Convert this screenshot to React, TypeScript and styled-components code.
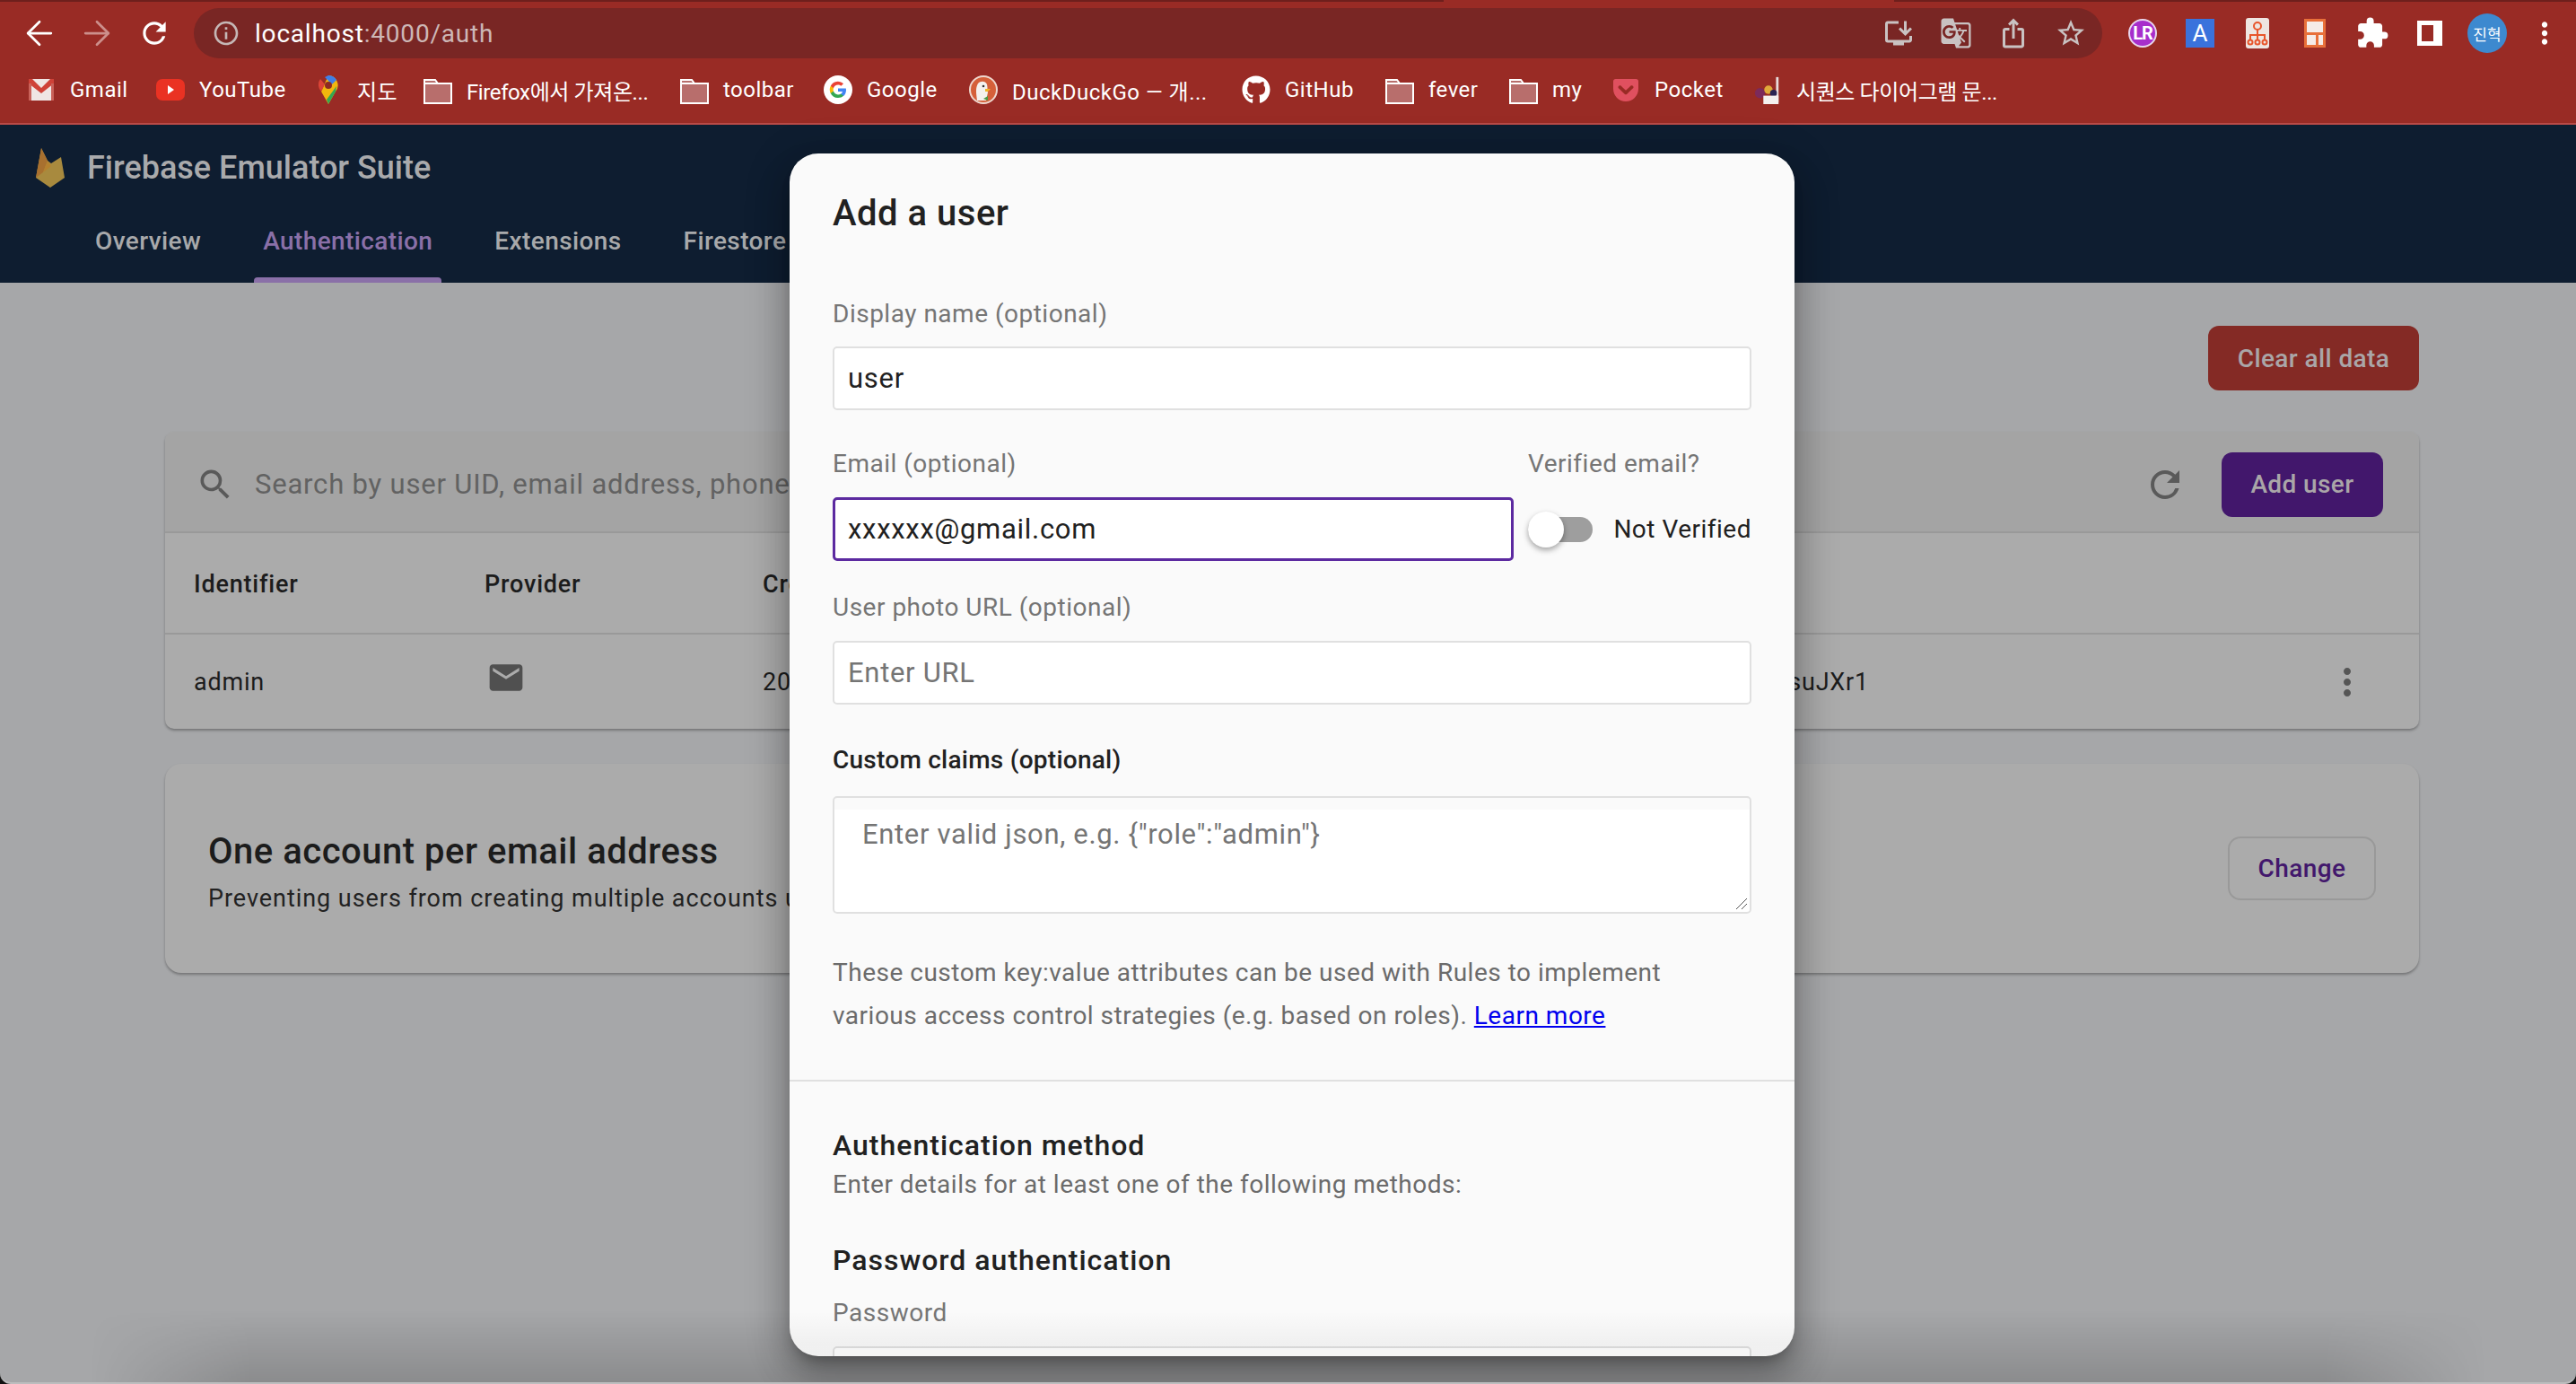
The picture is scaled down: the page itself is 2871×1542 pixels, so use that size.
import React from 'react'
import styled, { createGlobalStyle } from 'styled-components'
import { ArrowLeft, ArrowRight } from 'lucide-react'
import {
  MdExtension,
  MdInfoOutline,
  MdMail,
  MdMoreVert,
  MdRefresh,
  MdSearch,
  MdStarBorder,
  MdIosShare,
  MdInstallDesktop,
  MdGTranslate,
} from 'react-icons/md'
import { FaGithub, FaGetPocket } from 'react-icons/fa'

const GlobalStyle = createGlobalStyle`
  html, body {
    margin: 0;
    padding: 0;
    background: #111;
  }
  body {
    font-family: Roboto, "Noto Sans CJK KR", sans-serif;
    overflow: hidden;
  }
  * { box-sizing: border-box; }
`

const Page = styled.div`
  position: relative;
  width: 2871px;
  height: 1542px;
  overflow: hidden;
  background: #a6a7a9;
  border-bottom: 2px solid #bcbdbe;
  border-radius: 0 0 12px 12px;

  /* the soft darkening along the bottom of the window */
  &::before {
    content: '';
    position: absolute;
    left: 100px;
    right: 100px;
    bottom: 0;
    height: 80px;
    background: linear-gradient(transparent, rgba(0, 0, 0, 0.16));
    mask-image: linear-gradient(90deg, transparent, #000 180px, #000 calc(100% - 180px), transparent);
  }
`

/* browser chrome */
const Toolbar = styled.div`
  height: 74px;
  background: linear-gradient(#6e1f1c, #6e1f1c) 0 0 / 1609px 2px no-repeat, linear-gradient(#6e1f1c, #6e1f1c) 2111px 0 / 760px 2px no-repeat, #992b25;
  display: flex;
  align-items: center;
  padding-left: 12px;
`

const NavButton = styled.div<{ $dim?: boolean }>`
  width: 64px;
  height: 64px;
  display: flex;
  align-items: center;
  justify-content: center;
  color: ${({ $dim }) => ($dim ? '#cc8f8b' : '#fff')};
  font-size: 38px;
`

const Omnibox = styled.div`
  margin-left: 12px;
  width: 2127px;
  height: 56px;
  border-radius: 28px;
  background: #792624;
  display: flex;
  align-items: center;
  padding-left: 20px;
  padding-right: 3px;
`

const InfoIcon = styled.div`
  color: #c5b7b6;
  font-size: 32px;
  display: flex;
  margin-right: 16px;
`

const Url = styled.div`
  font-size: 28px;
  letter-spacing: 0.8px;
  color: #fff;
  flex: 1;
  span { color: #cdb7b6; }
`

const OmniAction = styled.div`
  width: 64px;
  display: flex;
  justify-content: center;
  color: #c9c2c2;
  font-size: 36px;
`

const ExtensionSlot = styled.div`
  width: 64px;
  height: 56px;
  display: flex;
  align-items: center;
  justify-content: center;
  color: #fff;
  font-size: 38px;
`

const ExtensionRow = styled.div`
  margin-left: 13px;
  display: flex;
`

const LrBadge = styled.div`
  width: 32px;
  height: 32px;
  border-radius: 50%;
  background: #a72ecb;
  border: 2px solid #e8d6ee;
  color: #fff;
  font-size: 20px;
  font-weight: 700;
  letter-spacing: -1px;
  display: flex;
  align-items: center;
  justify-content: center;
`

const ABadge = styled.div`
  width: 32px;
  height: 32px;
  background: #3a72dc;
  color: #fff;
  font-size: 26px;
  display: flex;
  align-items: center;
  justify-content: center;
`

const PanelIcon = styled.div`
  width: 28px;
  height: 28px;
  border: 5px solid #fff;
  border-right-width: 10px;
`

const Avatar = styled.div`
  width: 44px;
  height: 44px;
  border-radius: 50%;
  background: #3d89cf;
  color: #fff;
  font-size: 17px;
  display: flex;
  align-items: center;
  justify-content: center;
`

const Bookmarks = styled.div`
  height: 65px;
  background: #992b25;
  border-bottom: 2px solid #b84a47;
  display: flex;
  align-items: center;
  padding: 0 0 11px 30px;
  gap: 34px;
`

const Bookmark = styled.div`
  display: flex;
  align-items: center;
  gap: 16px;
  color: #fff;
  font-size: 24px;
  letter-spacing: 0.5px;
  white-space: nowrap;
`

const BookmarkLabel = styled.span<{ $width: number }>`
  width: ${({ $width }) => $width}px;
`

const CjkLabel = styled(BookmarkLabel)`
  letter-spacing: -0.4px;
`

const BookmarkIcon = styled.div<{ $color?: string }>`
  width: 32px;
  height: 32px;
  display: flex;
  align-items: center;
  justify-content: center;
  color: ${({ $color }) => $color || '#fff'};
  font-size: 32px;
`

/* firebase app bar */
const AppBar = styled.header`
  height: 176px;
  background: #0e1d30;
  padding-left: 40px;
`

const Brand = styled.div`
  height: 94px;
  padding-top: 2px;
  display: flex;
  align-items: center;
  gap: 25px;
  color: #a9aaac;
  font-size: 36px;
  font-weight: 500;
`

const Tabs = styled.nav`
  display: flex;
  padding-left: 56px;
  height: 82px;
`

const Tab = styled.div<{ $active?: boolean }>`
  position: relative;
  padding: 0 10px 12px;
  margin-right: 49px;
  height: 82px;
  display: flex;
  align-items: center;
  font-size: 28px;
  font-weight: 500;
  letter-spacing: 0.4px;
  color: ${({ $active }) => ($active ? '#8a70a8' : '#a8a9ab')};

  &::after {
    content: '';
    display: ${({ $active }) => ($active ? 'block' : 'none')};
    position: absolute;
    left: 0;
    right: 0;
    bottom: 0;
    height: 6px;
    border-radius: 4px 4px 0 0;
    background: #8a70a8;
  }
`

/* dimmed page */
const Main = styled.main`
  padding: 48px 175px 0 184px;
  display: flex;
  flex-direction: column;
`

const ClearRow = styled.div`
  display: flex;
  justify-content: flex-end;
  margin-bottom: 46px;
`

const Button = styled.div<{ $bg: string; $width: number }>`
  width: ${({ $width }) => $width}px;
  height: 72px;
  border-radius: 12px;
  background: ${({ $bg }) => $bg};
  color: #aaa6a8;
  font-size: 28px;
  font-weight: 500;
  letter-spacing: 0.4px;
  display: flex;
  align-items: center;
  justify-content: center;
`

const Card = styled.section`
  border-radius: 10px;
  background: #ababab;
  box-shadow: 0 2px 3px rgba(0, 0, 0, 0.3);
  overflow: hidden;
`

const SearchBar = styled.div`
  height: 113px;
  background: #a4a4a4;
  border-bottom: 2px solid #999;
  display: flex;
  align-items: center;
  padding: 6px 40px 0 34px;
  color: #5a5a5a;
`

const SearchIcon = styled.div`
  font-size: 44px;
  display: flex;
  margin-right: 22px;
`

/* the rest of the placeholder runs behind the dialog, so it stops at its edge */
const SearchText = styled.div`
  flex: 1;
  font-size: 31px;
  letter-spacing: 0.8px;
  color: #626262;
  white-space: nowrap;
`

const SearchClip = styled.span`
  display: block;
  width: 596px;
  overflow: hidden;
`

const RefreshIcon = styled.div`
  font-size: 48px;
  display: flex;
  margin-right: 39px;
`

const TableRow = styled.div<{ $head?: boolean }>`
  display: grid;
  grid-template-columns: 324px 310px 300px 1fr 573px;
  align-items: center;
  height: ${({ $head }) => ($head ? 113 : 105)}px;
  padding: ${({ $head }) => ($head ? 2 : 0)}px 40px 0 32px;
  border-bottom: ${({ $head }) => ($head ? '2px solid #999' : 'none')};
  font-size: 27px;
  letter-spacing: 0.8px;
  font-weight: ${({ $head }) => ($head ? 500 : 400)};
  color: #1c1c1c;
`

const ProviderIcon = styled.div`
  font-size: 44px;
  color: #505050;
  display: flex;
  margin: -10px 0 0 2px;
`

const UidCell = styled.div`
  text-align: right;
  white-space: nowrap;
`

const KebabCell = styled.div`
  display: flex;
  justify-content: flex-end;
  padding-right: 16px;
  font-size: 48px;
  color: #555;
`

const SettingCard = styled(Card)`
  margin-top: 39px;
  height: 233px;
  display: flex;
  align-items: center;
  justify-content: space-between;
  padding: 0 48px;
  border-radius: 18px;
`

const SettingCopy = styled.div`
  padding-top: 7px;
`

const SettingTitle = styled.h2`
  margin: 0;
  font-size: 40px;
  line-height: 48px;
  font-weight: 500;
  letter-spacing: 0.5px;
  color: #1c1c1c;
`

const SettingText = styled.p`
  margin: 11px 0 0;
  font-size: 27px;
  line-height: 34px;
  letter-spacing: 0.95px;
  color: #222;
  white-space: nowrap;
`

const OutlineButton = styled.div`
  width: 165px;
  height: 71px;
  border: 2px solid #999;
  border-radius: 14px;
  color: #42176c;
  font-size: 28px;
  font-weight: 500;
  letter-spacing: 0.4px;
  display: flex;
  align-items: center;
  justify-content: center;
`

/* dialog */
const Dialog = styled.div`
  position: absolute;
  left: 880px;
  top: 171px;
  width: 1120px;
  height: 1340px;
  background: #fafafa;
  border-radius: 32px;
  box-shadow: 0 11px 15px -7px rgba(0, 0, 0, 0.3), 0 24px 38px 3px rgba(0, 0, 0, 0.2), 0 9px 46px 8px rgba(0, 0, 0, 0.16);
  overflow: hidden;

  &::after {
    content: '';
    position: absolute;
    left: 0;
    right: 0;
    bottom: 0;
    height: 50px;
    background: linear-gradient(transparent, rgba(0, 0, 0, 0.04) 70%);
  }
`

const DialogBody = styled.div`
  padding: 40px 48px 0;
  display: flex;
  flex-direction: column;
`

const DialogTitle = styled.h1`
  margin: 0;
  height: 52px;
  font-size: 40px;
  line-height: 54px;
  font-weight: 500;
  letter-spacing: 0.5px;
  color: #212121;
`

const Label = styled.label<{ $strong?: boolean }>`
  display: block;
  font-size: 28px;
  line-height: 34px;
  letter-spacing: ${({ $strong }) => ($strong ? 0.25 : 0.5)}px;
  font-weight: ${({ $strong }) => ($strong ? 500 : 400)};
  color: ${({ $strong }) => ($strong ? '#212121' : '#757575')};
`

const FirstLabel = styled(Label)`
  margin-top: 70px;
  margin-bottom: 19px;
`

const Input = styled.div<{ $focused?: boolean; $placeholder?: boolean }>`
  height: 71px;
  background: #fff;
  border: ${({ $focused }) => ($focused ? '3px solid #5c2aa0' : '2px solid #e0e0e0')};
  border-radius: 5px;
  display: flex;
  align-items: center;
  padding-left: ${({ $focused }) => ($focused ? 14 : 15)}px;
  font-size: 31px;
  letter-spacing: 0.7px;
  color: ${({ $placeholder }) => ($placeholder ? '#757575' : '#212121')};
`

const EmailGrid = styled.div`
  margin-top: 43px;
  display: grid;
  grid-template-columns: 759px 1fr;
  column-gap: 16px;
  row-gap: 20px;
`

const ToggleCell = styled.div`
  display: flex;
  align-items: center;
  justify-content: space-between;
`

const Toggle = styled.div`
  position: relative;
  width: 72px;
  height: 28px;
  border-radius: 14px;
  background: #9e9e9e;
`

const Thumb = styled.div`
  position: absolute;
  left: 0;
  top: -6px;
  width: 40px;
  height: 40px;
  border-radius: 50%;
  background: #fff;
  box-shadow: 0 3px 6px rgba(0, 0, 0, 0.35);
`

const ToggleText = styled.span`
  font-size: 28px;
  letter-spacing: 0.5px;
  color: #212121;
`

const PhotoLabel = styled(Label)`
  margin-top: 35px;
  margin-bottom: 20px;
`

const ClaimsLabel = styled(Label)`
  margin-top: 45px;
  margin-bottom: 23px;
`

const TextArea = styled.div`
  position: relative;
  height: 131px;
  border: 2px solid #e0e0e0;
  border-radius: 5px;
  background: linear-gradient(#fafafa, #fafafa) 0 0 / 100% 13px no-repeat, #fff;
  padding: 21px 0 0 31px;
  font-size: 31px;
  letter-spacing: 0.66px;
  line-height: 40px;
  color: #757575;
`

const ResizeGrip = styled.svg`
  position: absolute;
  right: 2px;
  bottom: 2px;
`

const Help = styled.p`
  margin: 42px 0 0;
  font-size: 28px;
  line-height: 48px;
  letter-spacing: 0.5px;
  color: #6b6b6b;
  white-space: nowrap;
  a { color: #0000ee; }
`

const Divider = styled.hr`
  margin: 47px 0 0;
  border: 0;
  height: 2px;
  background: #e0e0e0;
`

const SectionTitle = styled.h3<{ $gap: number }>`
  margin: ${({ $gap }) => $gap}px 0 0;
  font-size: 32px;
  line-height: 40px;
  font-weight: 500;
  letter-spacing: 1px;
  color: #212121;
`

const SectionText = styled.p`
  margin: 4px 0 0;
  font-size: 28px;
  line-height: 40px;
  letter-spacing: 0.5px;
  color: #6b6b6b;
`

const PasswordLabel = styled(Label)`
  margin-top: 22px;
  margin-bottom: 20px;
`

function FirebaseLogo() {
  return (
    <svg width="32" height="44" viewBox="0 0 32 44">
      <path d="M0 33 6 0l7 14 4 3 11-7 4 23-16 11Z" fill="#a88a3e" />
      <path d="M0 33 6 0l7 14-5 13Z" fill="#a8702f" />
      <path d="M13 14l4 6-9 7Z" fill="#b5812f" />
    </svg>
  )
}

function GmailIcon() {
  return (
    <svg width="28" height="24" viewBox="0 0 28 24">
      <rect width="28" height="24" fill="#efe6e4" />
      <path d="M0 0h4l10 10L24 0h4v5L14 16 0 5Z" fill="#cf4238" />
      <path d="M0 5h3v19H0ZM25 5h3v19h-3Z" fill="#c9625a" />
    </svg>
  )
}

function YoutubeIcon() {
  return (
    <svg width="32" height="24" viewBox="0 0 32 24">
      <rect width="32" height="24" rx="7" fill="#ea3223" />
      <path d="M13 7l7 5-7 5Z" fill="#fff" />
    </svg>
  )
}

function MapsIcon() {
  return (
    <svg width="22" height="32" viewBox="0 0 22 32">
      <path d="M11 0a11 11 0 0 1 8 18L11 32 3 18Z" fill="#f1b70e" />
      <path d="M11 0a11 11 0 0 1 9 5l-5 5-8-8Z" fill="#3f7fe8" />
      <path d="M2 4 7 10l-4 8A11 11 0 0 1 2 4Z" fill="#db4437" />
      <path d="M19 18 11 32l-2-5 11-15Z" fill="#34a853" />
      <circle cx="11" cy="11" r="4" fill="#8c2a22" />
    </svg>
  )
}

function GoogleIcon() {
  return (
    <svg width="32" height="32" viewBox="0 0 32 32">
      <circle cx="16" cy="16" r="16" fill="#fff" />
      <path d="M25 16.3c0-.7-.1-1.300-.2-1.900H16v3.600h5a4.300 4.300 0 0 1-1.900 2.800v2.300h3c1.800-1.600 2.900-3.900 2.900-6.800Z" fill="#4285f4" />
      <path d="M16 25c2.500 0 4.500-.8 6.100-2.200l-3-2.300c-.8.600-1.900.9-3.100.9-2.400 0-4.400-1.600-5.100-3.800H7.800v2.400A9 9 0 0 0 16 25Z" fill="#34a853" />
      <path d="M10.900 17.600a5.400 5.400 0 0 1 0-3.400v-2.400H7.800a9 9 0 0 0 0 8.200Z" fill="#fbbc05" />
      <path d="M16 10.400c1.300 0 2.500.5 3.400 1.400l2.600-2.600A9 9 0 0 0 7.800 11.800l3.100 2.400c.7-2.200 2.700-3.800 5.100-3.800Z" fill="#ea4335" />
    </svg>
  )
}

function DuckIcon() {
  return (
    <svg width="32" height="32" viewBox="0 0 32 32">
      <circle cx="16" cy="16" r="15" fill="#d5603a" stroke="#efd8cf" strokeWidth="2" />
      <path d="M9 28c-1-8-2-14 1-19 3-3 8-3 10 1 1 4 0 6 1 9l-2 9Z" fill="#f4f1ee" />
      <path d="M18 15h6l-3 3h-3Z" fill="#f0b429" />
      <path d="M16 26l5-3v5Z" fill="#4c9a46" />
      <circle cx="16" cy="12" r="1.300" fill="#333" />
    </svg>
  )
}

function SequenceIcon() {
  return (
    <svg width="34" height="34" viewBox="0 0 34 34">
      <path d="M27 2h3v30h-3Z" fill="#e7dcdc" />
      <circle cx="8" cy="21" r="6" fill="#7c2a5b" />
      <circle cx="18" cy="17" r="5" fill="#e0a93a" />
      <circle cx="24" cy="21" r="4" fill="#2a2452" />
      <rect x="12" y="24" width="18" height="10" fill="#f4f0ef" />
    </svg>
  )
}

function HierarchyIcon() {
  return (
    <svg width="26" height="34" viewBox="0 0 26 34">
      <rect width="26" height="34" rx="3" fill="#eee6e2" />
      <g fill="none" stroke="#e8562c" strokeWidth="2">
        <circle cx="13" cy="9" r="4" />
        <path d="M13 13v6M5 25v-6h16v6M13 19v6" />
        <circle cx="5" cy="27" r="2.500" />
        <circle cx="13" cy="27" r="2.500" />
        <circle cx="21" cy="27" r="2.500" />
      </g>
    </svg>
  )
}

function LayoutIcon() {
  return (
    <svg width="24" height="32" viewBox="0 0 24 32">
      <rect width="24" height="32" fill="#e8703a" />
      <rect x="3" y="3" width="18" height="12" fill="#f5ece8" />
      <rect x="3" y="18" width="10" height="11" fill="#f5ece8" />
      <rect x="16" y="18" width="5" height="11" fill="#f5ece8" />
    </svg>
  )
}

function FolderIcon() {
  return (
    <BookmarkIcon>
      <svg width="32" height="32" viewBox="0 0 32 32">
        <path d="M1 5h12l3 4h15v22H1Z" fill="#b86e6c" stroke="#fff" strokeWidth="2" />
        <path d="M1 9h30" stroke="#fff" strokeWidth="2" />
      </svg>
    </BookmarkIcon>
  )
}

export default function App() {
  return (
    <Page>
      <GlobalStyle />
      <Toolbar>
        <NavButton><ArrowLeft size={44} strokeWidth={1.5} /></NavButton>
        <NavButton $dim><ArrowRight size={44} strokeWidth={1.5} /></NavButton>
        <NavButton><MdRefresh /></NavButton>
        <Omnibox>
          <InfoIcon><MdInfoOutline /></InfoIcon>
          <Url>localhost<span>:4000/auth</span></Url>
          <OmniAction><MdInstallDesktop /></OmniAction>
          <OmniAction><MdGTranslate /></OmniAction>
          <OmniAction><MdIosShare /></OmniAction>
          <OmniAction><MdStarBorder /></OmniAction>
        </Omnibox>
        <ExtensionRow>
          <ExtensionSlot><LrBadge>LR</LrBadge></ExtensionSlot>
          <ExtensionSlot><ABadge>A</ABadge></ExtensionSlot>
          <ExtensionSlot><HierarchyIcon /></ExtensionSlot>
          <ExtensionSlot><LayoutIcon /></ExtensionSlot>
          <ExtensionSlot><MdExtension /></ExtensionSlot>
          <ExtensionSlot><PanelIcon /></ExtensionSlot>
          <ExtensionSlot><Avatar>진혁</Avatar></ExtensionSlot>
          <ExtensionSlot><MdMoreVert /></ExtensionSlot>
        </ExtensionRow>
      </Toolbar>
      <Bookmarks>
        <Bookmark><BookmarkIcon><GmailIcon /></BookmarkIcon><BookmarkLabel $width={62}>Gmail</BookmarkLabel></Bookmark>
        <Bookmark><BookmarkIcon><YoutubeIcon /></BookmarkIcon><BookmarkLabel $width={94}>YouTube</BookmarkLabel></Bookmark>
        <Bookmark><BookmarkIcon><MapsIcon /></BookmarkIcon><BookmarkLabel $width={40}>지도</BookmarkLabel></Bookmark>
        <Bookmark><FolderIcon /><CjkLabel $width={204}>Firefox에서 가져온...</CjkLabel></Bookmark>
        <Bookmark><FolderIcon /><BookmarkLabel $width={78}>toolbar</BookmarkLabel></Bookmark>
        <Bookmark><BookmarkIcon><GoogleIcon /></BookmarkIcon><BookmarkLabel $width={80}>Google</BookmarkLabel></Bookmark>
        <Bookmark><BookmarkIcon><DuckIcon /></BookmarkIcon><BookmarkLabel $width={222}>DuckDuckGo — 개...</BookmarkLabel></Bookmark>
        <Bookmark><BookmarkIcon><FaGithub /></BookmarkIcon><BookmarkLabel $width={78}>GitHub</BookmarkLabel></Bookmark>
        <Bookmark><FolderIcon /><BookmarkLabel $width={56}>fever</BookmarkLabel></Bookmark>
        <Bookmark><FolderIcon /><BookmarkLabel $width={32}>my</BookmarkLabel></Bookmark>
        <Bookmark><BookmarkIcon $color="#e0505f"><FaGetPocket /></BookmarkIcon><BookmarkLabel $width={76}>Pocket</BookmarkLabel></Bookmark>
        <Bookmark><BookmarkIcon><SequenceIcon /></BookmarkIcon><CjkLabel $width={220}>시퀀스 다이어그램 문...</CjkLabel></Bookmark>
      </Bookmarks>

      <AppBar>
        <Brand><FirebaseLogo />Firebase Emulator Suite</Brand>
        <Tabs>
          <Tab>Overview</Tab>
          <Tab $active>Authentication</Tab>
          <Tab>Extensions</Tab>
          <Tab>Firestore</Tab>
        </Tabs>
      </AppBar>

      <Main>
        <ClearRow><Button $bg="#842a25" $width={235}>Clear all data</Button></ClearRow>
        <Card>
          <SearchBar>
            <SearchIcon><MdSearch /></SearchIcon>
            <SearchText><SearchClip>Search by user UID, email address, phone</SearchClip></SearchText>
            <RefreshIcon><MdRefresh /></RefreshIcon>
            <Button $bg="#42176c" $width={180}>Add user</Button>
          </SearchBar>
          <TableRow $head>
            <div>Identifier</div>
            <div>Provider</div>
            <div>Created</div>
          </TableRow>
          <TableRow>
            <div>admin</div>
            <ProviderIcon><MdMail /></ProviderIcon>
            <div>2022</div>
            <UidCell>suJXr1</UidCell>
            <KebabCell><MdMoreVert /></KebabCell>
          </TableRow>
        </Card>
        <SettingCard>
          <SettingCopy>
            <SettingTitle>One account per email address</SettingTitle>
            <SettingText>Preventing users from creating multiple accounts using the same email address</SettingText>
          </SettingCopy>
          <OutlineButton>Change</OutlineButton>
        </SettingCard>
      </Main>

      <Dialog>
        <DialogBody>
          <DialogTitle>Add a user</DialogTitle>
          <FirstLabel>Display name (optional)</FirstLabel>
          <Input>user</Input>
          <EmailGrid>
            <Label>Email (optional)</Label>
            <Label>Verified email?</Label>
            <Input $focused>xxxxxx@gmail.com</Input>
            <ToggleCell>
              <Toggle><Thumb /></Toggle>
              <ToggleText>Not Verified</ToggleText>
            </ToggleCell>
          </EmailGrid>
          <PhotoLabel>User photo URL (optional)</PhotoLabel>
          <Input $placeholder>Enter URL</Input>
          <ClaimsLabel $strong>Custom claims (optional)</ClaimsLabel>
          <TextArea>
            {'Enter valid json, e.g. {"role":"admin"}'}
            <ResizeGrip width="14" height="14" viewBox="0 0 14 14">
              <path d="M1 13 13 1M7 13l6-6" stroke="#555" strokeWidth="1" />
            </ResizeGrip>
          </TextArea>
          <Help>
            These custom key:value attributes can be used with Rules to implement
            <br />
            various access control strategies (e.g. based on roles). <a href="#learn">Learn more</a>
          </Help>
        </DialogBody>
        <Divider />
        <DialogBody>
          <SectionTitle $gap={11}>Authentication method</SectionTitle>
          <SectionText>Enter details for at least one of the following methods:</SectionText>
          <SectionTitle $gap={44}>Password authentication</SectionTitle>
          <PasswordLabel>Password</PasswordLabel>
          <Input />
        </DialogBody>
      </Dialog>
    </Page>
  )
}
